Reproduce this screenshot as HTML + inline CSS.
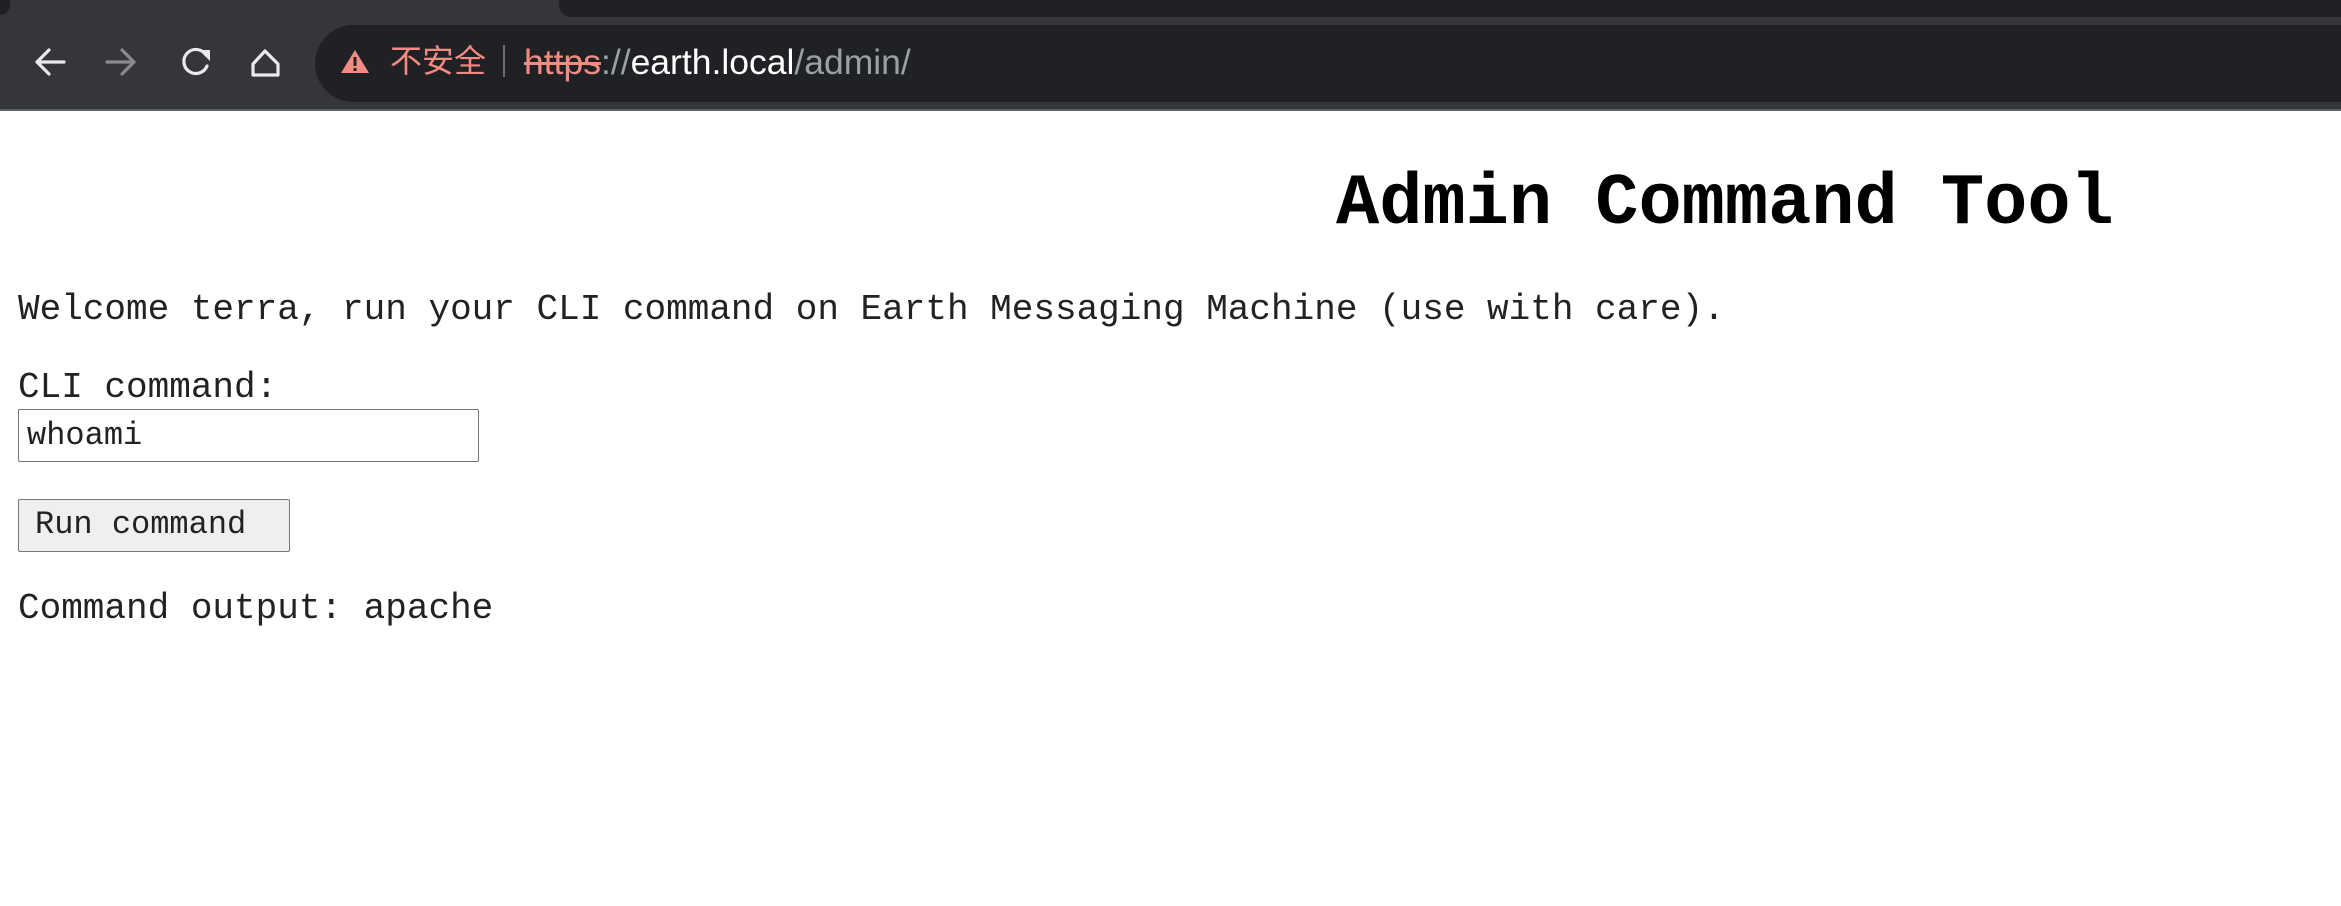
<!DOCTYPE html>
<html><head><meta charset="utf-8"><style>
html,body{margin:0;padding:0;width:2341px;height:906px;overflow:hidden;background:#fff;}
#chrome{position:absolute;left:0;top:0;width:2341px;height:111px;background:#35363a;}
#tabs{position:absolute;left:0;top:0;width:2341px;height:17px;background:#35363a;}
#tab{position:absolute;left:559px;top:-10px;width:1800px;height:27px;background:#202124;border-radius:12px;}
#tabl{position:absolute;left:-10px;top:-10px;width:20px;height:25px;background:#202124;border-radius:10px;}
#line{position:absolute;left:0;top:109px;width:2341px;height:2px;background:#5f6368;}
#url{position:absolute;left:315px;top:25px;width:2100px;height:77px;background:#202124;border-radius:39px;}
.t{position:absolute;font-family:"Liberation Sans","Noto Sans CJK SC",sans-serif;}
.m{position:absolute;font-family:"Liberation Mono","Courier New",monospace;color:#222;white-space:pre;}
</style></head><body>
<div id="chrome">
<div id="tabs"><div id="tabl"></div><div id="tab"></div></div>
<div id="url"></div>
<svg style="position:absolute;left:0;top:0" width="400" height="110">
<g fill="none" stroke-width="3.2" stroke-linecap="round" stroke-linejoin="round">
<path d="M64 62H37M49 50L37 62L49 74" stroke="#e8eaed"/>
<path d="M107 62H134M122 50L134 62L122 74" stroke="#8a8b8e"/>
<path d="M206 55A12 12 0 1 0 207 66" stroke="#e8eaed"/>
<path d="M253 64L265 51L278 64V75H253Z" stroke="#e8eaed"/>
</g>
<path d="M199 50L210 50L210 61Z" fill="#e8eaed"/>
<path d="M355 50L369 73H341Z" fill="#f28b82"/>
<rect x="353.5" y="57" width="3" height="9" fill="#202124"/><rect x="353.5" y="68" width="3" height="3" fill="#202124"/>
</svg>
<div class="t" style="left:390px;top:41px;font-size:32px;color:#f28b82;line-height:40px;">不安全</div>
<div style="position:absolute;left:503px;top:45px;width:2px;height:32px;background:#6b6d70"></div>
<div class="t" style="left:524px;top:42px;font-size:35.5px;line-height:40px;color:#9aa0a6;white-space:pre"><span style="color:#f28b82;text-decoration:line-through">https</span>://<span style="color:#fff">earth.local</span>/admin/</div>
<div id="line"></div>
</div>
<div class="m" style="left:1336px;top:168px;font-size:72px;font-weight:bold;line-height:72px;color:#000">Admin Command Tool</div>
<div class="m" style="left:18px;top:290px;font-size:36px;line-height:40px">Welcome terra, run your CLI command on Earth Messaging Machine (use with care).</div>
<div class="m" style="left:18px;top:368px;font-size:36px;line-height:40px">CLI command:</div>
<div style="position:absolute;left:18px;top:409px;width:459px;height:51px;border:1px solid #767676;border-radius:2px;"></div>
<div class="m" style="left:27px;top:416px;font-size:32px;line-height:40px">whoami</div>
<div style="position:absolute;left:18px;top:499px;width:270px;height:51px;border:1px solid #767676;border-radius:2px;background:#efefef;"></div>
<div class="m" style="left:35px;top:505px;font-size:32px;line-height:40px">Run command</div>
<div class="m" style="left:18px;top:589px;font-size:36px;line-height:40px">Command output: apache</div>
</body></html>
